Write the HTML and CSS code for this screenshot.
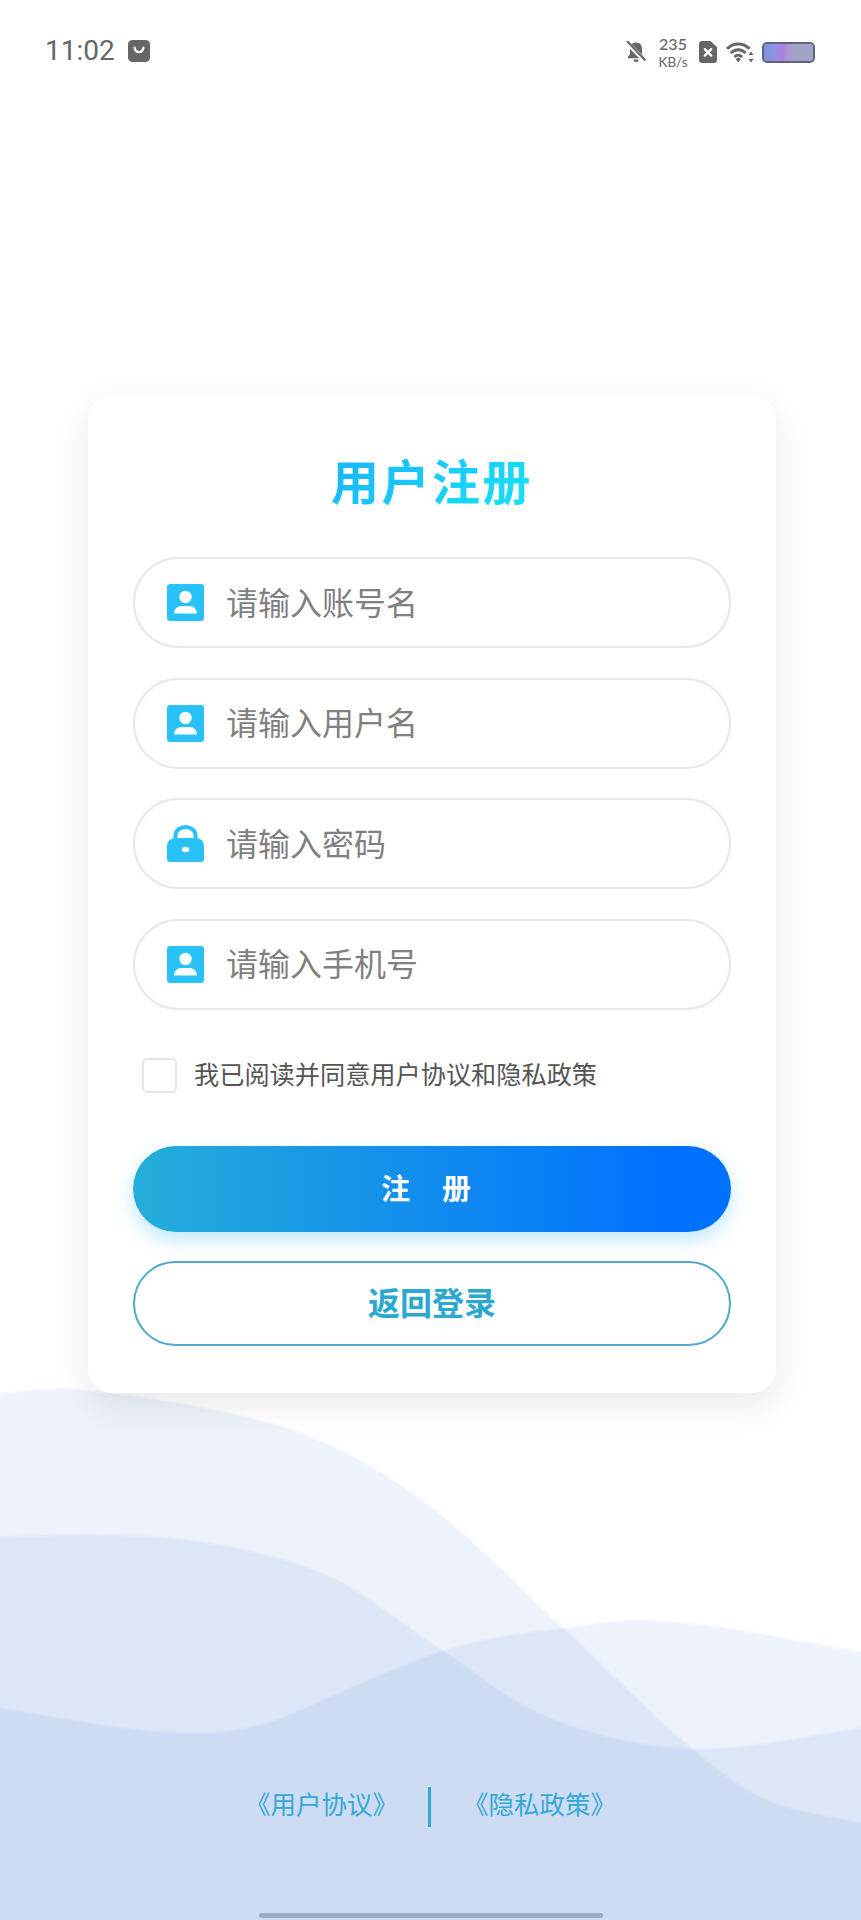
FILE: index.html
```html
<!DOCTYPE html>
<html lang="zh-CN">
<head>
<meta charset="utf-8">
<title>用户注册</title>
<link rel="stylesheet" href="styles.css">
</head>
<body>
<div class="screen">
  <svg class="waves" viewBox="0 0 861 1920" aria-hidden="true">
    <path class="wave" d="M-20 1394L0 1394C14 1392 45 1387 82 1390C119 1393 179 1402 220 1411C261 1420 293 1428 330 1445C367 1462 402 1484 440 1514C478 1544 518 1586 560 1625C602 1664 657 1720 692 1749C727 1778 741 1789 769 1801C797 1813 846 1819 861 1823L881 1825V1940H-20Z"/>
    <path class="wave" d="M-20 1538L0 1537C18 1537 73 1534 110 1535C147 1536 183 1538 220 1545C257 1552 293 1560 330 1577C367 1594 404 1626 440 1649C477 1672 507 1701 549 1718C591 1735 640 1747 692 1749C744 1751 833 1732 861 1728L881 1725V1940H-20Z"/>
    <path class="wave" d="M-20 1703L0 1708C27 1712 119 1730 165 1732C211 1734 229 1734 275 1721C321 1702 392 1668 440 1652C488 1637 525 1633 566 1628C607 1620 638 1619 687 1623C736 1627 832 1648 861 1652L881 1658V1940H-20Z"/>
  </svg>

  <header class="status">
    <div class="status-left">
      <span class="time">11:02</span>
      <svg class="ic-bag" viewBox="0 0 22 22"><rect width="22" height="22" rx="4.5" fill="#666"/><path d="M6.500 7.500c.6 3.400 2.400 4.600 4.500 4.600s3.900-1.200 4.500-4.600" fill="none" stroke="#fff" stroke-width="2.200" stroke-linecap="round"/></svg>
    </div>
    <div class="status-right">
      <svg class="ic-bell" viewBox="0 0 20 22"><path d="M10 1.500c-3.800 0-6 2.800-6 6.300v5.200L1.800 16v1.200h16.400V16L16 13V7.800c0-3.500-2.200-6.300-6-6.300z" fill="#666"/><path d="M7.500 18.500h5a2.500 2.500 0 0 1-5 0z" fill="#666"/><path d="M1 1.500 19 20" stroke="#fff" stroke-width="4.500"/><path d="M1 0 19.500 19.500" stroke="#666" stroke-width="2.200"/></svg>
      <div class="speed"><span class="speed-num">235</span><span class="speed-unit">KB/s</span></div>
      <svg class="ic-sim" viewBox="0 0 18 22"><path d="M3 0h8.500L18 6v13a3 3 0 0 1-3 3H3a3 3 0 0 1-3-3V3a3 3 0 0 1 3-3z" fill="#666"/><path d="M5.800 8.200l6.400 6.400M12.200 8.200l-6.400 6.400" stroke="#fff" stroke-width="2.400" stroke-linecap="round"/></svg>
      <svg class="ic-wifi" viewBox="0 0 28 21"><path d="M1 6.800c6.500-6.500 16-6.500 22.500 0" fill="none" stroke="#666" stroke-width="3"/><path d="M4.800 11c4.500-4.500 10.400-4.500 14.900 0" fill="none" stroke="#666" stroke-width="3"/><path d="M8.400 15c2.600-2.600 5.100-2.600 7.700 0" fill="none" stroke="#666" stroke-width="2.800"/><path d="M9.600 17 12.250 15.400 14.900 17 12.250 20.500z" fill="#666"/><path d="M25 9.500l2.500 3.400h-5zM25 20.500l-2.500-3.400h5z" fill="#666"/></svg>
      <div class="battery"><span class="battery-glow"></span></div>
    </div>
  </header>

  <main class="card">
    <h1 class="title">用户注册</h1>
    <div class="fields">
      <div class="field">
        <svg class="ic-field" viewBox="0 0 37 37"><rect width="37" height="37" rx="3" fill="#29c2f8"/><circle cx="18.500" cy="13" r="6.200" fill="#fff"/><path d="M7 29.500c0-4.500 3.500-7.500 7.500-7.500h8c4 0 7.500 3 7.500 7.500z" fill="#fff"/></svg>
        <span class="placeholder">请输入账号名</span>
      </div>
      <div class="field">
        <svg class="ic-field" viewBox="0 0 37 37"><rect width="37" height="37" rx="3" fill="#29c2f8"/><circle cx="18.500" cy="13" r="6.200" fill="#fff"/><path d="M7 29.500c0-4.500 3.500-7.500 7.500-7.500h8c4 0 7.500 3 7.500 7.500z" fill="#fff"/></svg>
        <span class="placeholder">请输入用户名</span>
      </div>
      <div class="field">
        <svg class="ic-field" viewBox="0 0 37 37"><path d="M8.500 16v-6a10 8 0 0 1 20 0v6" fill="none" stroke="#29c2f8" stroke-width="4"/><path d="M8 13h21a8 8 0 0 1 8 8V34a3 3 0 0 1-3 3H3a3 3 0 0 1-3-3V21a8 8 0 0 1 8-8z" fill="#29c2f8"/><ellipse cx="18.500" cy="24.500" rx="3.800" ry="2.800" fill="#fff"/></svg>
        <span class="placeholder">请输入密码</span>
      </div>
      <div class="field">
        <svg class="ic-field" viewBox="0 0 37 37"><rect width="37" height="37" rx="3" fill="#29c2f8"/><circle cx="18.500" cy="13" r="6.200" fill="#fff"/><path d="M7 29.500c0-4.500 3.500-7.500 7.500-7.500h8c4 0 7.500 3 7.500 7.500z" fill="#fff"/></svg>
        <span class="placeholder">请输入手机号</span>
      </div>
    </div>
    <div class="agree">
      <span class="checkbox"></span>
      <span class="agree-text">我已阅读并同意用户协议和隐私政策</span>
    </div>
    <button class="btn btn-primary" type="button">注册</button>
    <button class="btn btn-outline" type="button">返回登录</button>
  </main>

  <footer class="links">
    <span class="link link-left">《用户协议》</span>
    <span class="link-sep"></span>
    <span class="link link-right">《隐私政策》</span>
  </footer>
  <div class="home-bar"></div>
</div>
</body>
</html>
```
FILE: styles.css
```css
* { box-sizing: border-box; }
html, body { margin: 0; padding: 0; background: #fff; }
body { font-family: "Noto Sans CJK SC", "Noto Sans", sans-serif; }

.screen {
  position: relative;
  width: 861px;
  height: 1920px;
  overflow: hidden;
  display: flex;
  flex-direction: column;
  background: #fff;
}
.waves { position: absolute; left: 0; top: 0; width: 861px; height: 1920px; overflow: visible; }
.wave { fill: rgb(50, 110, 215); fill-opacity: .09; filter: blur(1.2px); }

/* status bar */
.status {
  position: relative;
  height: 100px;
  padding: 37px 46px 0 45px;
  display: flex;
  justify-content: space-between;
  align-items: flex-start;
  flex: none;
}
.status-left { display: flex; align-items: center; gap: 13px; height: 24px; margin-top: 2px; }
.time { font: 400 28px/24px "Roboto", sans-serif; color: #666; letter-spacing: 0; }
.ic-bag { width: 22px; height: 22px; }
.status-right { display: flex; align-items: center; height: 30px; }
.ic-bell { width: 20px; height: 22px; margin-right: 12px; margin-left: -2px; }
.speed { display: flex; flex-direction: column; align-items: center; width: 30px; margin-right: 11px; color: #666; font-family: "Lato", sans-serif; }
.speed-num { font-size: 16px; line-height: 20px; font-weight: 500; }
.speed-unit { font-size: 13.500px; line-height: 16px; }
.ic-sim { width: 18px; height: 22px; margin-right: 9px; }
.ic-wifi { width: 28px; height: 21px; margin-right: 8px; }
.battery {
  position: relative;
  width: 53px;
  height: 21px;
  border: 2px solid #5e6480;
  border-radius: 5px;
  background: #a0a4c6;
  overflow: hidden;
}
.battery-glow {
  position: absolute;
  inset: 0;
  background: linear-gradient(90deg, #7e93dc 0, #8f94e0 22%, #b07be6 38%, #a99bd0 50%, #a0a4c6 65%);
}

/* card */
.card {
  position: relative;
  flex: none;
  width: 688px;
  height: 998px;
  margin: 295px 0 0 88px;
  padding: 57px 45px 47px 45px;
  background: #fff;
  border-radius: 24px;
  box-shadow: 0 12px 36px rgba(0, 0, 0, .09);
  display: flex;
  flex-direction: column;
}
.title {
  margin: 0 0 51px;
  font-size: 48px;
  line-height: 54px;
  font-weight: 700;
  letter-spacing: 2.500px;
  text-align: center;
  background: linear-gradient(135deg, #1cb4f6 30%, #16e2fb 70%);
  -webkit-background-clip: text;
  background-clip: text;
  color: transparent;
}
.fields { display: flex; flex-direction: column; gap: 29.500px; }
.field {
  height: 91px;
  border: 2px solid #e8e8ea;
  border-radius: 46px;
  display: flex;
  align-items: center;
  padding-left: 32px;
  gap: 22px;
}
.ic-field { width: 37px; height: 37px; flex: none; }
.placeholder { font-size: 32px; line-height: 40px; color: #808080; padding-bottom: 4px; }

.agree { display: flex; align-items: center; gap: 17px; margin: 48px 0 0 9px; height: 35px; }
.checkbox {
  width: 35px;
  height: 35px;
  border: 2px solid #e6e6e6;
  border-radius: 5px;
  background: #fff;
  flex: none;
}
.agree-text { font-size: 25.200px; line-height: 31px; color: #555; padding-bottom: 4px; }

.btn {
  display: block;
  width: 100%;
  border-radius: 46px;
  font-family: inherit;
  font-weight: 700;
  text-align: center;
}
.btn-primary {
  height: 86px;
  margin-top: 53px;
  padding: 0 0 4px;
  border: 0;
  color: #fff;
  font-size: 29px;
  letter-spacing: 32px;
  text-indent: 20px;
  background: linear-gradient(90deg, #25aed9 0, #0070ff 90%);
  box-shadow: 0 8px 20px rgba(30, 170, 240, .28);
}
.btn-outline {
  height: 85px;
  margin-top: 29px;
  padding: 0 0 4px;
  border: 2px solid #4fa9c6;
  background: #fff;
  color: #2ba8cf;
  font-size: 32px;
}

/* footer */
.links {
  position: relative;
  flex: none;
  height: 40px;
  margin-top: 394px;
  display: flex;
  align-items: center;
  justify-content: center;
}
.link { font-size: 25.500px; line-height: 32px; color: #35a9d6; white-space: nowrap; padding-bottom: 8px; }
.link-left { margin-right: 29px; }
.link-right { margin-left: 32px; }
.link-sep { width: 3px; height: 40px; margin-left: 1px; background: #35a9d6; flex: none; }

.home-bar {
  position: relative;
  flex: none;
  width: 344px;
  height: 5px;
  margin: 86px 0 0 259px;
  border-radius: 3px;
  background: #9aa9c4;
}
```
